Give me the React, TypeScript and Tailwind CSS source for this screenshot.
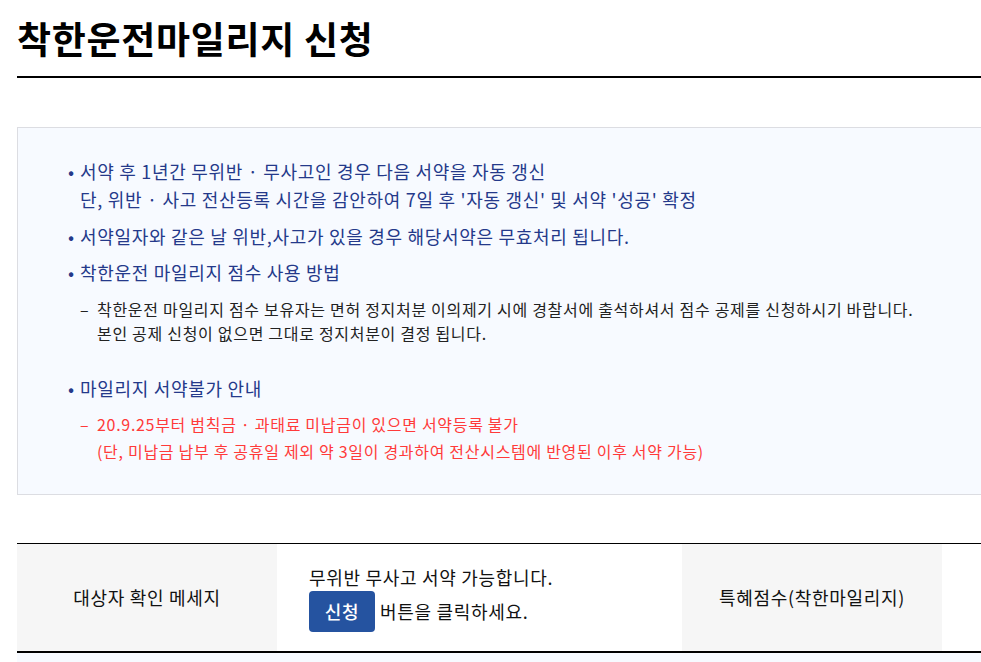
import React from "react";

const font = { fontFamily: '"Noto Sans CJK KR", "Noto Sans", sans-serif' };

const Bullet = ({ children }: { children: React.ReactNode }) => (
  <li className="relative pl-[13px] text-[18px] leading-[28px] tracking-[0.7px] text-[#24398a]">
    <span className="absolute left-[1px] top-0">•</span>
    {children}
  </li>
);

const Dash = ({ children, red }: { children: React.ReactNode; red?: boolean }) => (
  <div
    className={`relative ml-[13px] pl-[17px] text-[16px] tracking-[0.7px] ${
      red ? "leading-[27px] text-[#ff3a3a]" : "leading-[24px] text-[#222]"
    }`}
  >
    <span className="absolute left-0 top-0">–</span>
    {children}
  </div>
);

export default function App() {
  return (
    <div className="overflow-hidden bg-white" style={font}>
      <div className="w-[1000px] pl-[17px] pt-[14px]">
        <h1 className="border-b-2 border-black pb-[14px] text-[37px] font-bold leading-[48px] tracking-[0.7px] text-black">
          착한운전마일리지 신청
        </h1>

        <div className="mt-[49px] border border-[#dcdde2] bg-[#f7faff] pb-[29px] pl-[49px] pt-[29px]">
          <ul className="flex flex-col">
            <Bullet>
              서약 후 1년간 무위반 · 무사고인 경우 다음 서약을 자동 갱신
              <br />
              단, 위반 · 사고 전산등록 시간을 감안하여 7일 후 '자동 갱신' 및 서약 '성공' 확정
            </Bullet>
            <div className="h-[9px]" />
            <Bullet>서약일자와 같은 날 위반,사고가 있을 경우 해당서약은 무효처리 됩니다.</Bullet>
            <div className="h-[8px]" />
            <Bullet>착한운전 마일리지 점수 사용 방법</Bullet>
            <div className="mt-[11px]">
              <Dash>
                착한운전 마일리지 점수 보유자는 면허 정지처분 이의제기 시에 경찰서에 출석하셔서 점수 공제를 신청하시기 바랍니다.
                <br />
                본인 공제 신청이 없으면 그대로 정지처분이 결정 됩니다.
              </Dash>
            </div>
            <div className="h-[29px]" />
            <Bullet>마일리지 서약불가 안내</Bullet>
            <div className="mt-[9px]">
              <Dash red>
                20.9.25부터 범칙금 · 과태료 미납금이 있으면 서약등록 불가
                <br />
                (단, 미납금 납부 후 공휴일 제외 약 3일이 경과하여 전산시스템에 반영된 이후 서약 가능)
              </Dash>
            </div>
          </ul>
        </div>

        <div className="mt-[48px] grid h-[110px] grid-cols-[260px_405px_260px_1fr] border-b-2 border-t border-black text-[18px] tracking-[0.7px] text-[#111]">
          <div className="flex items-center justify-center bg-[#f6f6f6]">
            대상자 확인 메세지
          </div>
          <div className="flex flex-col justify-center pl-[32px]">
            <div className="leading-[28px]">무위반 무사고 서약 가능합니다.</div>
            <div className="flex items-center gap-[5px]">
              <button className="h-[41px] w-[66px] rounded-[4px] bg-[#2553a0] text-[18px] font-medium tracking-[0.7px] text-white">
                신청
              </button>
              <span>버튼을 클릭하세요.</span>
            </div>
          </div>
          <div className="flex items-center justify-center bg-[#f6f6f6]">
            특혜점수(착한마일리지)
          </div>
          <div />
        </div>
        <div className="h-[20px] bg-[#f7faff]" />
      </div>
    </div>
  );
}
